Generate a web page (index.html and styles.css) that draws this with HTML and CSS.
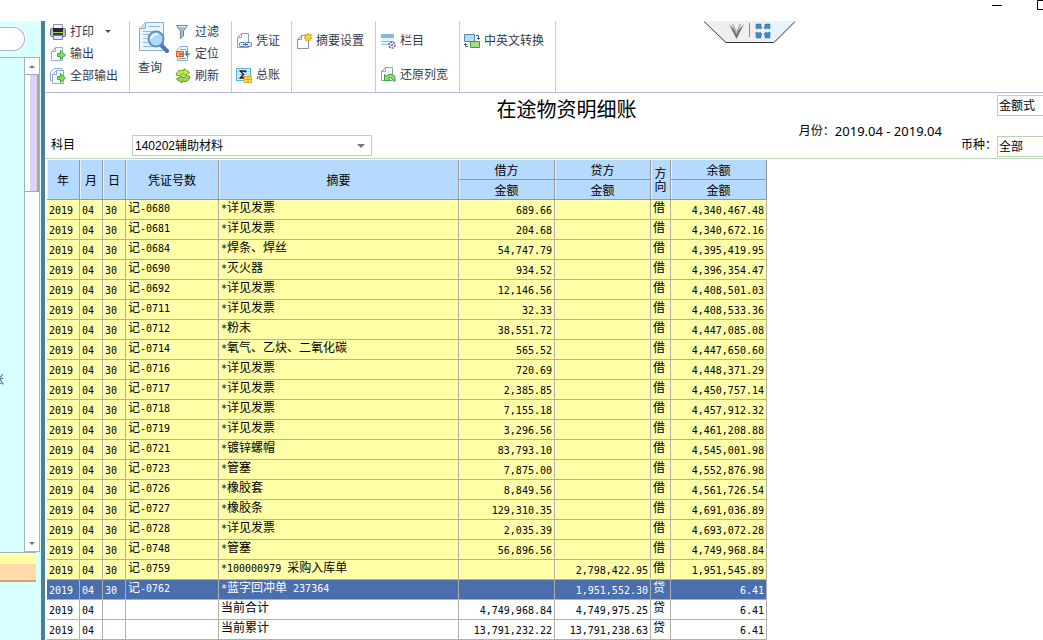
FILE: index.html
```html
<!DOCTYPE html>
<html lang="zh-CN">
<head>
<meta charset="utf-8">
<title>在途物资明细账</title>
<link rel="stylesheet" href="styles.css">
</head>
<body>
<header class="titlebar">
  <button class="win" aria-label="最小化"><svg width="12" height="12"><path d="M1 5.500H11" stroke="#000"/></svg></button>
  <button class="win" aria-label="最大化"><svg width="12" height="12"><path d="M.5 .5H11.500V9.500H.5Z" fill="none" stroke="#000"/></svg></button>
</header>
<div class="shell">
  <aside class="side">
    <div class="search-row"><input class="search" type="text" aria-label="搜索"></div>
    <div class="side-list">
      <div class="tree"><span class="tree-item">账</span></div>
      <div class="scroll">
        <button class="scroll-btn" aria-label="向上"><svg width="8" height="5"><path d="M1 4L4 1L7 4Z" fill="#777"/></svg></button>
        <div class="thumb"></div>
        <button class="scroll-btn bottom" aria-label="向下"><svg width="8" height="5"><path d="M1 1L4 4L7 1Z" fill="#777"/></svg></button>
      </div>
    </div>
    <div class="side-foot"><div class="foot-yellow"></div><div class="foot-orange"></div></div>
  </aside>
  <main class="main">
    <nav class="toolbar">
      <div class="group stack first">
        <button class="tool"><svg width="16" height="16" viewBox="0 0 16 16"><path d="M3.500 6V.5H12.500V6" fill="#f3f3ff" stroke="#8a8ac4"/><rect x=".5" y="4.500" width="15" height="8" rx="1" fill="#b4b8c8" stroke="#6a7088"/><rect x="3" y="4" width="10" height="4" fill="#25282d"/><rect x="3" y="8" width="10" height="1" fill="#a8c552"/><rect x="3" y="9" width="10" height="2" fill="#3a3d48"/><path d="M3.500 11.500H12.500V15.500H3.500Z" fill="#e4e4fc" stroke="#7478ae"/></svg>打印<svg class="caret" width="7" height="4"><path d="M0 0H6L3 3Z" fill="#555"/></svg></button>
        <button class="tool"><svg width="16" height="16" viewBox="0 0 16 16"><path d="M5.500 1.500H12.500V14.500H1.500V5.500Z" fill="#f9fcff" stroke="#8eaad8"/><path d="M1.500 5.500H5.500V1.500" fill="none" stroke="#8eaad8"/><path d="M7.500 7.500H10.500V4.500L15.500 9L10.500 13.500V10.500H7.500Z" fill="#7be05c" stroke="#45a53c"/></svg>输出</button>
        <button class="tool"><svg width="16" height="16" viewBox="0 0 16 16"><path d="M4 .5H11.500V2M4 .5L.5 4V12.500H2" fill="none" stroke="#8eaad8"/><path d="M6.500 2.500H13.500V15.500H2.500V6.500Z" fill="#f9fcff" stroke="#8eaad8"/><path d="M2.500 6.500H6.500V2.500" fill="none" stroke="#8eaad8"/><path d="M7.500 8.500H10.500V5.500L15.500 10L10.500 14.500V11.500H7.500Z" fill="#7be05c" stroke="#45a53c"/></svg>全部输出</button>
      </div>
      <div class="group query">
        <button class="big"><svg width="32" height="32" viewBox="0 0 32 32"><path d="M7.500 1.500H25.500V29.500H1.500V7.500Z" fill="#e9f5ff" stroke="#88acd5"/><path d="M1.500 7.500H7.500V1.500" fill="#c9dff4" stroke="#88acd5"/><path d="M10 5.500H22M5 10.500H22M5 13.500H11M5 17.500H9M5 21.500H10M5 25.500H16" stroke="#95b7dd"/><path d="M23 24L29 30" stroke="#4f74aa" stroke-width="4" stroke-linecap="round"/><circle cx="18" cy="18" r="7.500" fill="#acd9f8" stroke="#6790c0" stroke-width="2"/><path d="M13 18Q14 13 20 13" fill="none" stroke="#eefaff" stroke-width="2"/></svg><span>查询</span></button>
        <div class="stack">
          <button class="tool"><svg width="16" height="16" viewBox="0 0 16 16"><path d="M1.500 1.500H12.500L8.500 7V12L5.500 14.500V7Z" fill="#a9bbd6" stroke="#71829e"/><path d="M3 2.500H11" stroke="#edf4ff"/></svg>过滤</button>
          <button class="tool"><svg width="16" height="16" viewBox="0 0 16 16"><path d="M5.500 .5H12.500V14.500H2.500V3.500Z" fill="#f7fbff" stroke="#8aabc8"/><path d="M5 3.500H11M4 12.500H11M10 5.500H12" stroke="#6ba1c7"/><rect x="1.500" y="5.500" width="7" height="5" fill="#f3a06c" stroke="#d8632f"/><path d="M4 8H8" stroke="#c03e1b"/><path d="M15 8H11M13 5.500L10.500 8L13 10.500" fill="none" stroke="#4f87ad" stroke-width="1.500"/></svg>定位</button>
          <button class="tool"><svg width="16" height="16" viewBox="0 0 16 16"><path d="M1 7Q2 1 9 2.500V.5L14.500 4.500L9 8V6Q5 5 4.500 8Z" fill="#c4e93c" stroke="#6aa826"/><path d="M15 8.500Q14 15 7 13V15L1.500 11L7 7.500V9.500Q11 10.500 11.500 7.500Z" fill="#a3d638" stroke="#5e9c22"/></svg>刷新</button>
        </div>
      </div>
      <div class="group pair vouchers">
        <button class="tool"><svg width="16" height="16" viewBox="0 0 16 16"><path d="M5.500 .5H12.500V14.500H1.500V4.500Z" fill="#f9fbff" stroke="#8a9fc8"/><path d="M1.500 4.500H5.500V.5" fill="none" stroke="#8a9fc8"/><rect x="3.500" y="9.500" width="6" height="4" rx="1" fill="#e1edff" stroke="#5a80bc"/><rect x="9.500" y="9.500" width="6" height="4" rx="1" fill="#e1edff" stroke="#5a80bc"/><path d="M7 11.500H12" stroke="#3b5b94"/></svg>凭证</button>
        <button class="tool"><svg width="16" height="16" viewBox="0 0 16 16"><rect x=".5" y="1.500" width="14" height="12" fill="#d6f2fd" stroke="#5cb3dc"/><path d="M1 4.500H14M1 7.500H14M1 10.500H14" stroke="#9ed4ea"/><path d="M9.500 5.500V4H4.500L7.500 7.500L4.500 11H9.500V9.500" fill="none" stroke="#141f2c" stroke-width="1.500"/><path d="M8.500 9.500H15.500V15.500H8.500ZM12 9V16M8 12.500H16" fill="#ffe04c" stroke="#e0a81c"/></svg>总账</button>
      </div>
      <div class="group pair summary-set">
        <button class="tool"><svg width="16" height="16" viewBox="0 0 16 16"><path d="M5.500 2.500H12.500V15.500H1.500V6.500Z" fill="#fafcff" stroke="#8195b8"/><path d="M1.500 6.500H5.500V2.500" fill="none" stroke="#8195b8"/><path d="M12 0L13 2L15.500 1.500L14.500 4L16 5L14 6L14 8L12 7L10 8V6L8 5L10 3L9 1L11.500 2Z" fill="#ffcf2a" stroke="#e8a722"/></svg>摘要设置</button>
      </div>
      <div class="group pair columns">
        <button class="tool"><svg width="16" height="16" viewBox="0 0 16 16"><rect x="1" y="1" width="13" height="11" fill="#e6f2ff"/><rect x="1" y="1" width="13" height="4" fill="#82b9e6"/><path d="M1 8.500H14M1 11.500H9" stroke="#9dc0df"/><circle cx="12" cy="12" r="3" fill="#eef3ff" stroke="#606993" stroke-width="1.500" stroke-dasharray="2 1"/><circle cx="12" cy="12" r="1" fill="#505983"/></svg>栏目</button>
        <button class="tool"><svg width="16" height="16" viewBox="0 0 16 16"><path d="M5.500 .5H12.500V13.500H1.500V4.500Z" fill="#fafcff" stroke="#8aa2bd"/><path d="M1.500 4.500H5.500V.5" fill="none" stroke="#8aa2bd"/><path d="M4.500 7.500L6.500 9Q11 5 15 9.500V14.500L12.500 12.500Q11 9 8.500 11L10.500 13.500H4.500Z" fill="#8edb6c" stroke="#3e9f40"/></svg>还原列宽</button>
      </div>
      <div class="group pair language">
        <button class="tool"><svg width="16" height="16" viewBox="0 0 16 16"><path d="M.5 1.500H10.500V8.500H.5Z" fill="#b5dcff" stroke="#5582b5"/><path d="M6.500 8.500H15.500V14.500H6.500Z" fill="#a4dd84" stroke="#4b963b"/><path d="M12 2.500H14.500V6M13 5L14.500 6.500L16 5M4 13.500H1.500V10M0 12L1.500 10.500L3 12" fill="none" stroke="#3a5b8a"/></svg>中英文转换</button>
      </div>
      <button class="fold-tab" aria-label="收起"><svg width="92" height="22" viewBox="0 0 92 22"><path d="M0 0L22 21H70L91 0Z" fill="#efefef"/><path d="M68 1H90L72 19H58Z" fill="#e8f4fd"/><path d="M0 .5L22 21.500H70L91 .5" fill="none" stroke="#333"/><path d="M25 3L32.500 18L40 3L34.500 9L32.500 13L30.500 9Z" fill="#707070"/><path d="M28.500 3L32.500 12L36.500 3" fill="none" stroke="#aaa" stroke-width="1.500"/><path d="M45.500 2V16" stroke="#888"/><g fill="#3e8cc6" stroke="#2b6da3" stroke-width=".5"><path d="M52 3H57V5L58 7L56 8L55 7L52 8Z"/><path d="M66 3H61V5L60 7L62 8L63 7L66 8Z"/><path d="M52 17H57V15L58 13L56 11L55 12L52 11Z"/><path d="M66 17H61V15L60 13L62 11L63 12L66 11Z"/></g></svg></button>
    </nav>
    <section class="report-head">
      <div class="subject">
        <label for="subject">科目</label>
        <div class="picker"><select id="subject"><option>140202辅助材料</option></select><svg width="9" height="5"><path d="M0 0H8L4 4Z" fill="#777"/></svg></div>
      </div>
      <h1>在途物资明细账</h1>
      <div class="period"><span>月份：</span><span class="dates">2019.04 - 2019.04</span></div>
      <div class="options">
        <select class="edge" aria-label="账页格式"><option>金额式</option></select>
        <div class="currency"><label for="currency">币种：</label><select class="edge" id="currency"><option>全部</option></select></div>
      </div>
    </section>
    <table class="ledger">
      <colgroup><col class="c-year"><col class="c-md"><col class="c-md"><col class="c-voucher"><col class="c-summary"><col class="c-money"><col class="c-money"><col class="c-dir"><col class="c-money"></colgroup>
      <thead>
        <tr><th rowspan="2">年</th><th rowspan="2">月</th><th rowspan="2">日</th><th rowspan="2">凭证号数</th><th rowspan="2">摘要</th><th>借方</th><th>贷方</th><th rowspan="2" class="dir-head">方向</th><th>余额</th></tr>
        <tr><th>金额</th><th>金额</th><th>金额</th></tr>
      </thead>
      <tbody>
        <tr><td>2019</td><td>04</td><td>30</td><td>记<i>-0680</i></td><td><i>*</i>详见发票</td><td>689.66</td><td></td><td>借</td><td>4,340,467.48</td></tr>
        <tr><td>2019</td><td>04</td><td>30</td><td>记<i>-0681</i></td><td><i>*</i>详见发票</td><td>204.68</td><td></td><td>借</td><td>4,340,672.16</td></tr>
        <tr><td>2019</td><td>04</td><td>30</td><td>记<i>-0684</i></td><td><i>*</i>焊条、焊丝</td><td>54,747.79</td><td></td><td>借</td><td>4,395,419.95</td></tr>
        <tr><td>2019</td><td>04</td><td>30</td><td>记<i>-0690</i></td><td><i>*</i>灭火器</td><td>934.52</td><td></td><td>借</td><td>4,396,354.47</td></tr>
        <tr><td>2019</td><td>04</td><td>30</td><td>记<i>-0692</i></td><td><i>*</i>详见发票</td><td>12,146.56</td><td></td><td>借</td><td>4,408,501.03</td></tr>
        <tr><td>2019</td><td>04</td><td>30</td><td>记<i>-0711</i></td><td><i>*</i>详见发票</td><td>32.33</td><td></td><td>借</td><td>4,408,533.36</td></tr>
        <tr><td>2019</td><td>04</td><td>30</td><td>记<i>-0712</i></td><td><i>*</i>粉末</td><td>38,551.72</td><td></td><td>借</td><td>4,447,085.08</td></tr>
        <tr><td>2019</td><td>04</td><td>30</td><td>记<i>-0714</i></td><td><i>*</i>氧气、乙炔、二氧化碳</td><td>565.52</td><td></td><td>借</td><td>4,447,650.60</td></tr>
        <tr><td>2019</td><td>04</td><td>30</td><td>记<i>-0716</i></td><td><i>*</i>详见发票</td><td>720.69</td><td></td><td>借</td><td>4,448,371.29</td></tr>
        <tr><td>2019</td><td>04</td><td>30</td><td>记<i>-0717</i></td><td><i>*</i>详见发票</td><td>2,385.85</td><td></td><td>借</td><td>4,450,757.14</td></tr>
        <tr><td>2019</td><td>04</td><td>30</td><td>记<i>-0718</i></td><td><i>*</i>详见发票</td><td>7,155.18</td><td></td><td>借</td><td>4,457,912.32</td></tr>
        <tr><td>2019</td><td>04</td><td>30</td><td>记<i>-0719</i></td><td><i>*</i>详见发票</td><td>3,296.56</td><td></td><td>借</td><td>4,461,208.88</td></tr>
        <tr><td>2019</td><td>04</td><td>30</td><td>记<i>-0721</i></td><td><i>*</i>镀锌螺帽</td><td>83,793.10</td><td></td><td>借</td><td>4,545,001.98</td></tr>
        <tr><td>2019</td><td>04</td><td>30</td><td>记<i>-0723</i></td><td><i>*</i>管塞</td><td>7,875.00</td><td></td><td>借</td><td>4,552,876.98</td></tr>
        <tr><td>2019</td><td>04</td><td>30</td><td>记<i>-0726</i></td><td><i>*</i>橡胶套</td><td>8,849.56</td><td></td><td>借</td><td>4,561,726.54</td></tr>
        <tr><td>2019</td><td>04</td><td>30</td><td>记<i>-0727</i></td><td><i>*</i>橡胶条</td><td>129,310.35</td><td></td><td>借</td><td>4,691,036.89</td></tr>
        <tr><td>2019</td><td>04</td><td>30</td><td>记<i>-0728</i></td><td><i>*</i>详见发票</td><td>2,035.39</td><td></td><td>借</td><td>4,693,072.28</td></tr>
        <tr><td>2019</td><td>04</td><td>30</td><td>记<i>-0748</i></td><td><i>*</i>管塞</td><td>56,896.56</td><td></td><td>借</td><td>4,749,968.84</td></tr>
        <tr><td>2019</td><td>04</td><td>30</td><td>记<i>-0759</i></td><td><i>*100000979 </i>采购入库单</td><td></td><td>2,798,422.95</td><td>借</td><td>1,951,545.89</td></tr>
        <tr class="selected"><td>2019</td><td>04</td><td>30</td><td>记<i>-0762</i></td><td><i>*</i>蓝字回冲单<i> 237364</i></td><td></td><td>1,951,552.30</td><td>贷</td><td>6.41</td></tr>
        <tr class="total"><td>2019</td><td>04</td><td></td><td></td><td>当前合计</td><td>4,749,968.84</td><td>4,749,975.25</td><td>贷</td><td>6.41</td></tr>
        <tr class="total"><td>2019</td><td>04</td><td></td><td></td><td>当前累计</td><td>13,791,232.22</td><td>13,791,238.63</td><td>贷</td><td>6.41</td></tr>
      </tbody>
    </table>
  </main>
</div>
</body>
</html>
```
FILE: styles.css
```css
* { box-sizing: border-box; }
body {
  margin: 0;
  min-height: 100vh;
  display: flex;
  flex-direction: column;
  overflow-x: hidden;
  background: #fff;
  color: #000;
  font: 12px/16px "Liberation Sans", "Noto Sans CJK SC", sans-serif;
}
button, input, select { font: inherit; color: inherit; }
button { border: 0; padding: 0; background: none; }
svg { display: block; flex: none; }

.titlebar { height: 21px; display: flex; justify-content: flex-end; align-items: flex-start; gap: 34px; overflow: hidden; }
.win { width: 12px; height: 12px; flex: none; }
.win:last-child { margin-right: -6px; }

.shell { flex: 1; display: flex; }

.side {
  flex: none;
  width: 45px;
  display: flex;
  flex-direction: column;
  background: #d9ffff;
  border-right: 4px solid #4c7f99;
}
.search-row { height: 37px; padding-top: 6px; display: flex; justify-content: flex-start; border-bottom: 1px solid #9cb8b8; margin-right: 1px; }
.search { width: 25px; height: 24px; padding: 0; background: #fff; border: 1px solid #b4b4d2; border-left: 0; border-radius: 0 12px 12px 0; }
.side-list { flex: 1; display: flex; }
.tree { width: 24px; padding-top: 314px; overflow: hidden; display: flex; }
.tree-item { color: #235a78; margin-left: -8px; white-space: nowrap; }
.scroll { width: 16px; display: flex; flex-direction: column; background: #fff; border: 1px solid #a3b1bc; border-top: 0; }
.scroll-btn { height: 16px; display: flex; align-items: center; justify-content: center; }
.thumb { height: 118px; border: 1px solid #a8a8a8; border-width: 1px 0; background: linear-gradient(90deg, #fff 5px, #dbd3fb 5px, #dbd3fb 12px, #a8a8a8 12px); }
.scroll-btn.bottom { margin-top: auto; }
.side-foot { height: 88px; margin-right: 5px; border-top: 1px solid #a3b1bc; }
.foot-yellow { height: 11px; background: #ffffa8; }
.foot-orange { height: 18px; background: #ffdbaa; border-bottom: 2px solid #c7a47c; }

.main { flex: 1; min-width: 0; }

.toolbar { height: 72px; display: flex; border-bottom: 1px solid #b7b7d9; color: #333a50; }
.group { flex: none; display: flex; border-right: 1px solid #c9c9d3; }
.stack { display: flex; flex-direction: column; gap: 6px; padding-top: 3px; }
.first { width: 85px; padding-left: 5px; }
.tool { display: flex; align-items: center; gap: 4px; height: 16px; white-space: nowrap; }
.caret { margin-left: 7px; }
.query { width: 102px; padding-left: 8px; gap: 5px; }
.big { width: 32px; display: flex; flex-direction: column; align-items: flex-start; gap: 7px; }
.big span { white-space: nowrap; }
.pair { flex-direction: column; gap: 18px; padding: 12px 0 0 4px; }
.vouchers { width: 60px; }
.summary-set { width: 84px; }
.columns { width: 84px; }
.language { width: 96px; }
.fold-tab { align-self: flex-start; margin-left: 148px; }

.report-head { height: 66px; display: flex; border-bottom: 1px solid #bfd8b9; }
.subject { width: 327px; padding: 0 0 2px 6px; display: flex; align-items: flex-end; justify-content: space-between; }
.subject label { padding-bottom: 3px; }
.picker { position: relative; width: 240px; }
.picker svg { position: absolute; right: 6px; top: 9px; pointer-events: none; }
select { appearance: none; height: 21px; padding: 0 2px; background: #fff; border: 1px solid #b9d3b1; border-radius: 0; }
.picker select { width: 100%; display: block; }
h1 { flex: 1; margin: 0; padding: 5px 38px 0 0; text-align: center; font-size: 20px; line-height: 25px; font-weight: 400; }
.period { display: flex; padding-top: 30px; white-space: nowrap; }
.dates { font-family: "Noto Sans", sans-serif; font-size: 13px; }
.options { display: flex; flex-direction: column; align-items: flex-end; gap: 20px; padding-top: 2px; margin-left: 19px; }
.edge { width: 46px; padding: 0 1px; border-right: 0; }
.currency { display: flex; align-items: center; }
.currency label { padding-bottom: 4px; }

.ledger { width: 720px; margin: 1px 0 0 2px; table-layout: fixed; border-collapse: separate; border-spacing: 0; }
.c-year { width: 33px; }
.c-md { width: 23px; }
.c-voucher { width: 93px; }
.c-summary { width: 240px; }
.c-money { width: 96px; }
.c-dir { width: 20px; }
th, td { height: 20px; padding: 0; border-right: 1px solid #b0b0a8; border-bottom: 1px solid #b0b0a8; white-space: nowrap; }
th { padding-top: 2px; background: #b5d9ff; font-weight: 400; border-color: #999; box-shadow: inset 1px 0 #e4f1ff; }
.dir-head { padding: 2px 3px 0; white-space: normal; line-height: 13px; }
td { background: #ffffa8; font: 10px/16px "DejaVu Sans Mono", "Noto Sans CJK SC", monospace; text-align: right; padding: 3px 2px 0; }
td:nth-child(-n+5) { text-align: left; }
td:nth-child(4), td:nth-child(5), td:nth-child(8) { vertical-align: top; padding: 0 2px; font: 12px/16px "Liberation Sans", "Noto Sans CJK SC", sans-serif; }
td:nth-child(8) { text-align: left; }
td i { font: 10px/15px "DejaVu Sans Mono", monospace; white-space: pre; }
.selected td { background: #4a6eae; color: #fff; }
.total td { background: #fff; }
```
